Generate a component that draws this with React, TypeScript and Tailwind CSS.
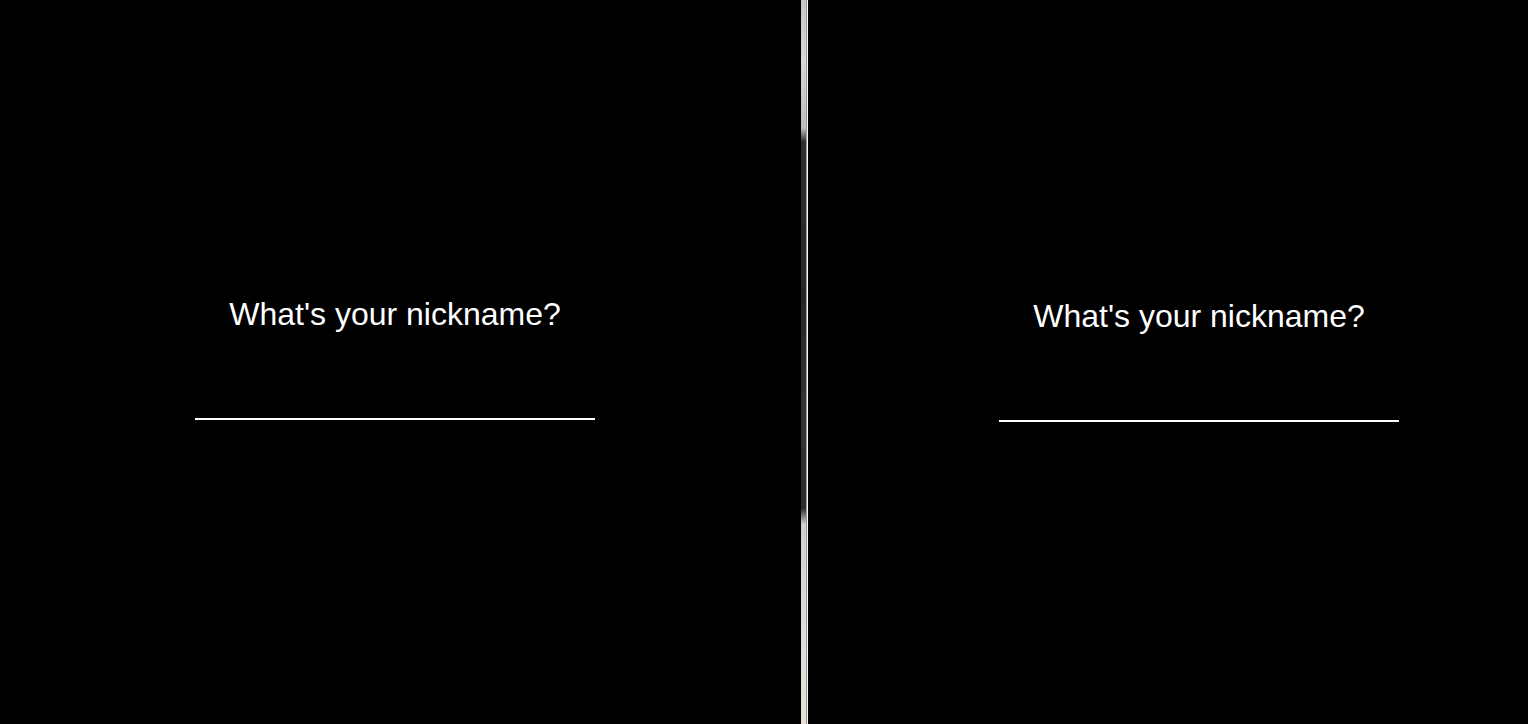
import React from "react";

export default function App() {
  return (
    <div className="flex h-[724px] w-[1528px] overflow-hidden bg-black">
      <div className="w-[801px] shrink-0">
        <div className="flex flex-col pl-[195px] pt-[296px]">
          <h1 className="w-[400px] text-center text-[32px] leading-[37px] font-normal text-white [font-family:'Liberation_Sans',Arial,sans-serif]">
            What's your nickname?
          </h1>
          <input
            type="text"
            aria-label="nickname"
            className="mt-[47px] h-[40px] w-[400px] border-0 border-b-2 border-white bg-transparent text-center text-[24px] text-white outline-none [font-family:'Liberation_Sans',Arial,sans-serif]"
          />
        </div>
      </div>
      <div className="flex w-[7px] shrink-0">
        <div className="w-[5px] bg-[linear-gradient(to_bottom,#c4c4c4_0px,#d6d6d6_60px,#bdbdbd_128px,#2e2e2e_142px,#262626_300px,#343434_420px,#2a2a2a_508px,#cfcfcf_524px,#dedede_650px,#e6e2cf_724px)]" />
        <div className="w-[1px] bg-[#9a9a9a]" />
        <div className="w-[1px] bg-[#f4f4f4]" />
      </div>
      <div className="flex-1">
        <div className="flex flex-col pl-[191px] pt-[298px]">
          <h1 className="w-[400px] text-center text-[32px] leading-[37px] font-normal text-white [font-family:'Liberation_Sans',Arial,sans-serif]">
            What's your nickname?
          </h1>
          <input
            type="text"
            aria-label="nickname"
            className="mt-[47px] h-[40px] w-[400px] border-0 border-b-2 border-white bg-transparent text-center text-[24px] text-white outline-none [font-family:'Liberation_Sans',Arial,sans-serif]"
          />
        </div>
      </div>
    </div>
  );
}
